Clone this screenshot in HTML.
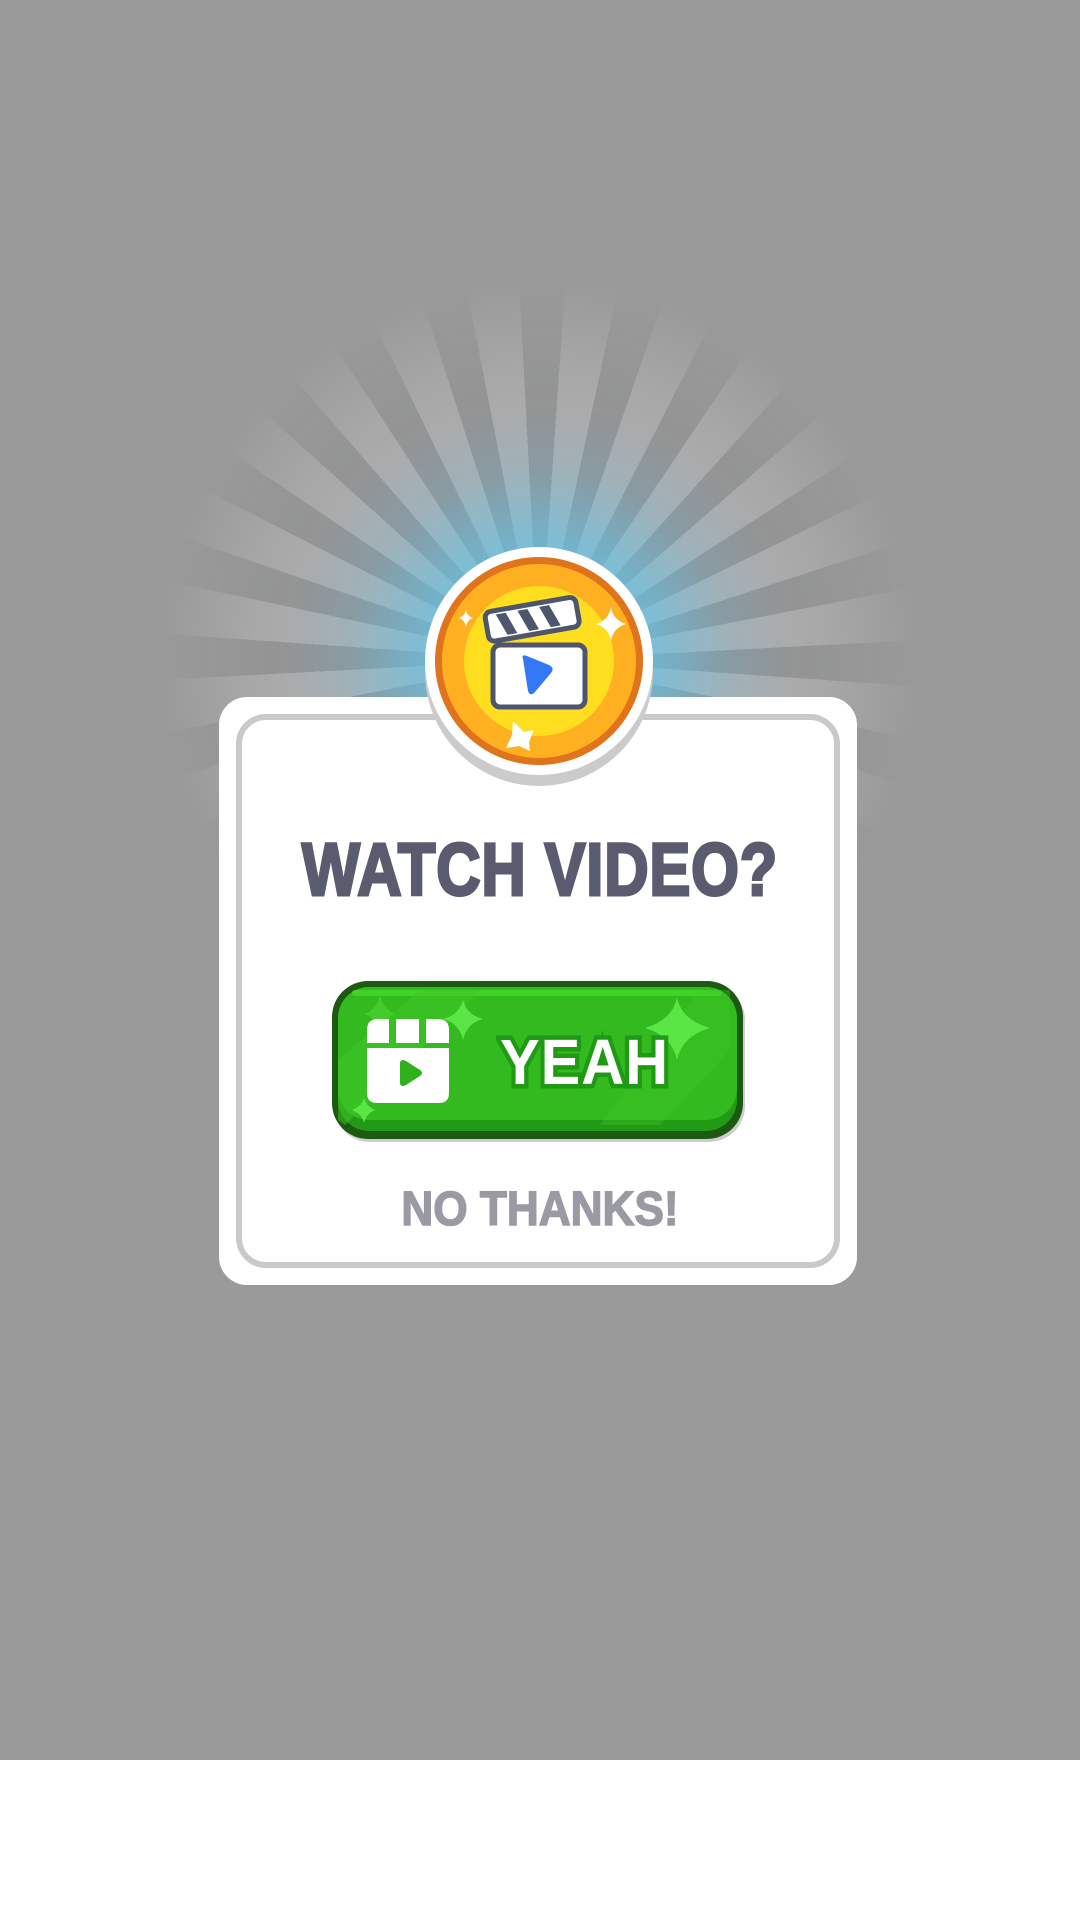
<!DOCTYPE html>
<html><head><meta charset="utf-8"><style>
html,body{margin:0;padding:0}
body{width:1080px;height:1920px;position:relative;overflow:hidden;background:#fff;font-family:"Liberation Sans",sans-serif}
.bg{position:absolute;left:0;top:0;width:1080px;height:1760px;background:#9a9a9a;overflow:hidden}
.rays{position:absolute;left:139px;top:260px;width:800px;height:800px;
background:repeating-conic-gradient(from 4deg, rgba(255,255,255,0.24) 0deg 8deg, rgba(70,80,90,0.10) 8deg 15deg);
-webkit-mask-image:radial-gradient(circle 380px at 50% 50%, #000 0, #000 45%, rgba(0,0,0,.6) 75%, transparent 100%);
mask-image:radial-gradient(circle 380px at 50% 50%, #000 0, #000 45%, rgba(0,0,0,.6) 75%, transparent 100%)}
.glow{position:absolute;left:259px;top:380px;width:560px;height:560px;border-radius:50%;
background:radial-gradient(circle, rgba(100,200,235,0.95) 0, rgba(100,195,230,0.7) 28%, rgba(110,180,210,0.25) 48%, rgba(100,180,210,0) 64%)}
.card{position:absolute;left:219px;top:697px;width:638px;height:588px;background:#fff;border-radius:28px}
.inner{position:absolute;left:17px;top:17px;right:17px;bottom:17px;border:6px solid #c9c9c9;border-radius:30px}
.title{position:absolute;left:0;width:1080px;top:830px;text-align:center;font-size:74px;font-weight:bold;color:#5a5b6e;letter-spacing:1px;-webkit-text-stroke:3px #5a5b6e;line-height:80px;transform:scaleX(0.83)}
.no{position:absolute;left:0;width:1080px;top:1183px;text-align:center;font-size:48px;font-weight:bold;color:#9a9aa5;-webkit-text-stroke:1.5px #9a9aa5;line-height:54px;transform:scaleX(0.92)}
.yeah{position:absolute;left:500px;top:1030px;font-size:64px;font-weight:bold;color:#fff;line-height:64px;letter-spacing:1px;
paint-order:stroke fill;-webkit-text-stroke:9px #209a14;transform:scaleX(0.93);transform-origin:left center}
</style></head><body>
<div class="bg">
 <div class="rays"></div>
 <div class="glow"></div>
</div>
<div class="card"><div class="inner"></div></div>

<svg style="position:absolute;left:0;top:0" width="1080" height="1920">
 <circle cx="539" cy="672" r="114" fill="#cbcbcb"/>
 <circle cx="539" cy="661" r="114" fill="#fff"/>
 <circle cx="539" cy="661" r="104" fill="#e0741c"/>
 <circle cx="539" cy="661" r="97" fill="#ffb020"/>
 <circle cx="539" cy="661" r="75" fill="#ffdd1f"/>
 <g transform="rotate(-10 490 645)">
  <rect x="490" y="612" width="92" height="30" rx="6" fill="#fff" stroke="#4e566e" stroke-width="5"/>
  <path d="M501 616h10l8 22h-10z M523 616h10l8 22h-10z M545 616h10l8 22h-10z" fill="#4e566e"/>
 </g>
 <rect x="493" y="645" width="92" height="62" rx="7" fill="#fff" stroke="#4e566e" stroke-width="5"/>
 <path d="M523 659 Q521 654 527 656 L549 665 Q555 668 551 673 L535 692 Q530 697 528 691 Z" fill="#3478f6"/>
 <path d="M611 607 Q613 620 626 624 Q613 628 611 641 Q609 628 596 624 Q609 620 611 607Z" fill="#fff"/>
 <path d="M466 610 Q467 616 473 618 Q467 620 466 627 Q465 620 459 618 Q465 616 466 610Z" fill="#fff"/>
 <path d="M513 721 L524 732 L534 730 L529 742 L530 751 L519 746 L506 748 L512 735Z" fill="#fff"/>
 <rect x="334" y="984" width="411" height="158" rx="36" fill="#cdcdcd"/>
 <rect x="332" y="981" width="411" height="158" rx="36" fill="#1b5a10"/>
 <rect x="338" y="987" width="399" height="144" rx="31" fill="#229a15"/>
 <rect x="338" y="987" width="399" height="133" rx="31" fill="#33ba1e"/>
 <rect x="352" y="990" width="370" height="6" rx="3" fill="#45d82b" opacity=".8"/>
 <path d="M338 1120 L338 1060 L420 990 L480 990 L345 1125Z" fill="#3fc828" opacity=".5"/>
 <path d="M600 1125 L700 990 L730 990 L730 1050 L660 1125Z" fill="#3fc828" opacity=".35"/>
 <path d="M380 995 Q384 1010 395 1014 Q384 1018 380 1034 Q376 1018 365 1014 Q376 1010 380 995Z" fill="#45cc2c"/>
 <path d="M463 1000 Q467 1015 483 1019 Q467 1023 463 1040 Q459 1023 443 1019 Q459 1015 463 1000Z" fill="#5ae644"/>
 <path d="M677 998 Q682 1020 710 1028 Q682 1036 677 1060 Q672 1036 645 1028 Q672 1020 677 998Z" fill="#5ae644"/>
 <path d="M364 1098 Q366 1106 375 1110 Q366 1114 364 1123 Q362 1114 352 1110 Q362 1106 364 1098Z" fill="#5ae644"/>
 <path d="M367 1043 V1030 Q367 1019 378 1019 H389 V1043Z" fill="#fff"/>
 <rect x="396" y="1019" width="23" height="24" fill="#fff"/>
 <path d="M426 1043 V1019 H438 Q449 1019 449 1030 V1043Z" fill="#fff"/>
 <path d="M367 1048 H449 V1093 Q449 1103 439 1103 H377 Q367 1103 367 1093Z" fill="#fff"/>
 <path d="M400 1064 Q400 1058 406 1061 L420 1070 Q424 1073 420 1076 L406 1085 Q400 1088 400 1082Z" fill="#2fb01c"/>
</svg>

<div class="title">WATCH VIDEO?</div>
<div class="yeah">YEAH</div>
<div class="no">NO THANKS!</div>
</body></html>
